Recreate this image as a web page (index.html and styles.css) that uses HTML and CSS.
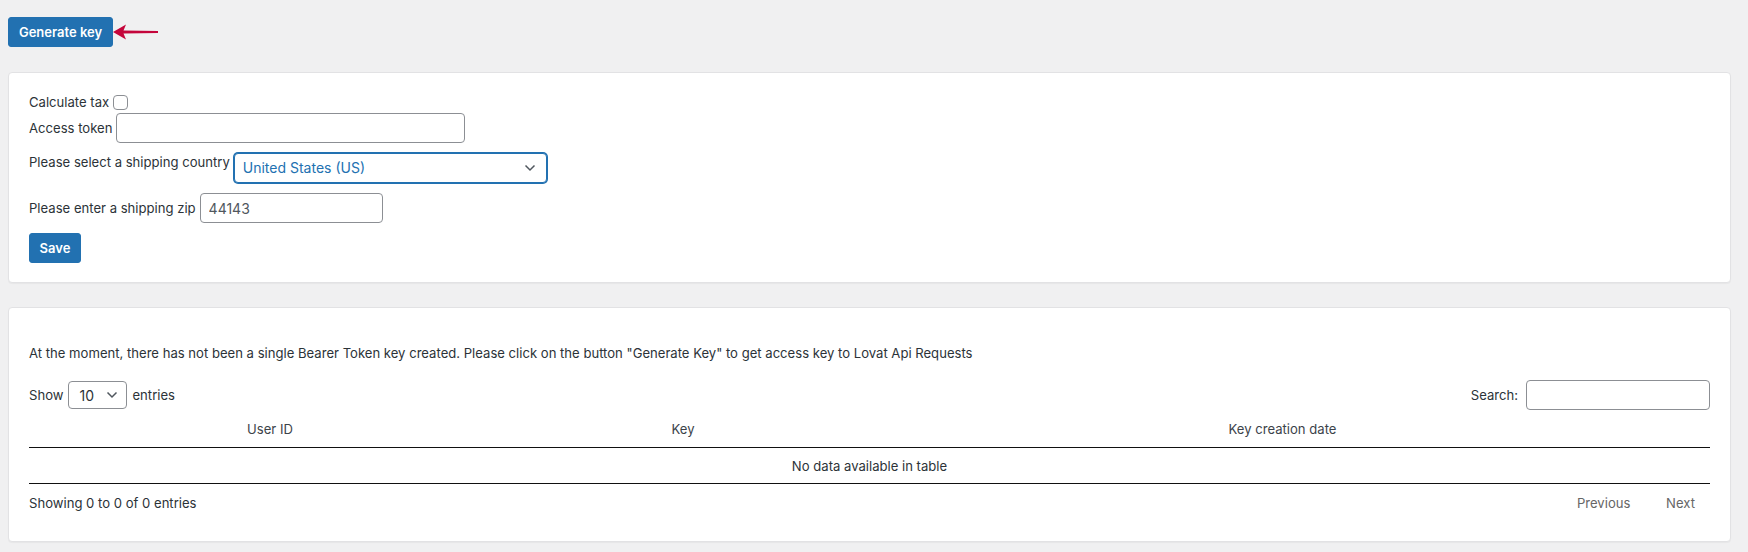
FILE: index.html
```html
<!DOCTYPE html>
<html>
<head lang="en">
    <meta charset="UTF-8">
    <link rel="stylesheet" href="styles.css">
    <title>Lovat settings</title>
</head>
<body>
<div class="wrap">
    <div class="topBar">
        <button class="btn">Generate key</button>
        <svg class="arrow" width="46" height="16" viewBox="0 0 46 16">
            <path d="M0 8 L13 0.5 L10.5 6.6 L45 6.9 L45 9.1 L10.5 9.4 L13 15.5 Z" fill="#c4053b"/>
        </svg>
    </div>

    <div class="card settings">
        <div class="row">
            <label>Calculate tax</label>
            <input type="checkbox" class="check">
        </div>
        <div class="row tokenRow">
            <label>Access token</label>
            <input type="text" class="field tokenField">
        </div>
        <div class="row countryRow">
            <label class="topLabel">Please select a shipping country</label>
            <div class="select focused countrySelect">
                <span>United States (US)</span>
                <svg width="12" height="8" viewBox="0 0 12 8"><path d="M1.5 1.5 L6 6 L10.5 1.5" fill="none" stroke="#50575e" stroke-width="1.5"/></svg>
            </div>
        </div>
        <div class="row zipRow">
            <label>Please enter a shipping zip</label>
            <input type="text" class="field zipField" value="44143">
        </div>
        <div class="row saveRow">
            <button class="btn small">Save</button>
        </div>
    </div>

    <div class="card keys">
        <p class="notice">At the moment, there has not been a single Bearer Token key created. Please click on the button "Generate Key" to get access key to Lovat Api Requests</p>

        <div class="tableTop">
            <div class="length">
                Show
                <div class="select lenSelect">
                    <span>10</span>
                    <svg width="12" height="8" viewBox="0 0 12 8"><path d="M1.5 1.5 L6 6 L10.5 1.5" fill="none" stroke="#50575e" stroke-width="1.5"/></svg>
                </div>
                entries
            </div>
            <div class="search">
                Search:
                <input type="text" class="field searchField">
            </div>
        </div>

        <table class="dataTable">
            <thead>
            <tr>
                <th class="colUser">User ID</th>
                <th class="colKey">Key</th>
                <th>Key creation date</th>
            </tr>
            </thead>
            <tbody>
            <tr>
                <td colspan="3" class="empty">No data available in table</td>
            </tr>
            </tbody>
        </table>

        <div class="tableBottom">
            <div class="info">Showing 0 to 0 of 0 entries</div>
            <div class="paginate">
                <a class="pageBtn">Previous</a>
                <a class="pageBtn">Next</a>
            </div>
        </div>
    </div>
</div>
</body>
</html>
```

FILE: styles.css
```css
body {
    margin: 0;
    background: #f0f0f1;
    font-family: Inter, "Liberation Sans", Arial, sans-serif;
    font-size: 13.1px;
    color: #2c3338;
}
.wrap {
    padding: 17px 17px 0 8px;
}
.topBar {
    display: flex;
    align-items: center;
    height: 30px;
    margin-bottom: 25px;
}
.arrow {
    margin-left: 0;
    margin-top: -1px;
}
.btn {
    background: #2271b1;
    color: #fff;
    border: 1px solid #2271b1;
    border-radius: 3px;
    font-family: inherit;
    font-size: 13px;
    font-weight: 600;
    height: 30px;
    width: 105px;
    padding: 0;
    cursor: pointer;
}
.btn.small {
    width: 52px;
}
.card {
    background: #fff;
    border: 1px solid #e2e2e4;
    border-radius: 4px;
    box-shadow: 0 1px 1px rgba(0, 0, 0, .04);
    padding: 20px 20px 19px 20px;
    margin-bottom: 24px;
}
.row {
    display: flex;
    align-items: center;
    gap: 4px;
    line-height: 18px;
}
.check {
    width: 15px;
    height: 15px;
    margin: 0;
    appearance: none;
    border: 1px solid #8c8f94;
    border-radius: 4px;
    background: #fff;
}
.field {
    height: 30px;
    box-sizing: border-box;
    border: 1px solid #8c8f94;
    border-radius: 4px;
    font-family: inherit;
    font-size: 14px;
    color: #50575e;
    padding: 0 8px;
    margin: 0;
}
.tokenRow {
    margin-top: 2px;
}
.tokenField {
    width: 349px;
}
.countryRow {
    margin-top: 9px;
    align-items: flex-start;
}
.topLabel {
    margin-top: 1px;
}
.select {
    display: flex;
    align-items: center;
    justify-content: space-between;
    box-sizing: border-box;
    border: 1px solid #8c8f94;
    border-radius: 4px;
    background: #fff;
    height: 30px;
    padding: 0 10px 0 8px;
}
.select.focused {
    border-color: #2271b1;
    box-shadow: 0 0 0 1px #2271b1;
    color: #2271b1;
}
.countrySelect {
    width: 313px;
    margin-top: 1px;
    font-size: 14px;
}
.zipRow {
    margin-top: 10px;
}
.zipField {
    width: 183px;
}
.saveRow {
    margin-top: 10px;
}
.notice {
    margin: 16px 0 18px 0;
    line-height: 18px;
}
.tableTop {
    display: flex;
    justify-content: space-between;
    align-items: center;
}
.length, .search {
    display: flex;
    align-items: center;
    gap: 5px;
}
.search {
    gap: 8px;
}
.lenSelect {
    width: 59px;
    height: 28px;
    padding: 0 8px 0 10px;
    font-size: 14px;
}
.searchField {
    width: 184px;
}
.dataTable {
    width: 100%;
    border-collapse: collapse;
    margin-top: 1px;
}
.dataTable th {
    font-weight: 400;
    color: #3c434a;
    padding: 9px 18px;
    line-height: 18px;
    border-bottom: 1px solid #111;
}
.colUser {
    width: 446px;
}
.colKey {
    width: 308px;
}
.dataTable td {
    padding: 9px 10px 8px 10px;
    line-height: 18px;
    text-align: center;
    border-bottom: 1px solid #111;
}
.tableBottom {
    display: flex;
    justify-content: space-between;
    align-items: center;
    padding: 9px 0 9px 0;
    line-height: 20px;
}
.pageBtn {
    color: #666;
    padding: 0 15px;
    cursor: default;
}
.pageBtn + .pageBtn {
    padding-left: 17px;
}
```
